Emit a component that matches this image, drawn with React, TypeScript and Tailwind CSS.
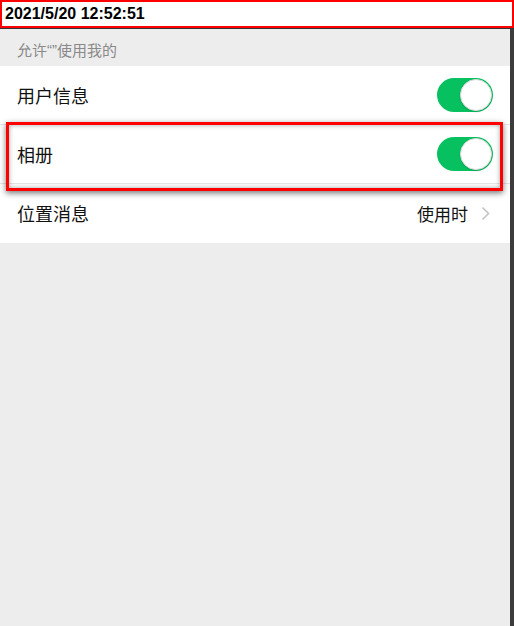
import React from 'react';

const cjk = { fontFamily: '"Noto Sans CJK SC", "Noto Sans", sans-serif' };

const Toggle: React.FC = () => (
  <div className="w-[56px] h-[34px] rounded-full bg-[#07c160] flex items-center justify-end pr-[1px]">
    <div className="w-[32px] h-[32px] rounded-full bg-white border border-[#d9d9d9] shadow-[0_1px_2px_rgba(0,0,0,0.15)]" />
  </div>
);

const Chevron: React.FC = () => (
  <svg width="9" height="15" viewBox="0 0 9 15" className="ml-[13px]">
    <path d="M1.5 1.5 L7.5 7.5 L1.5 13.5" fill="none" stroke="#c4c4c4" strokeWidth="1.6" />
  </svg>
);

const App: React.FC = () => {
  return (
    <div className="w-[514px] h-[626px] flex flex-col bg-[#ededed] overflow-hidden" style={cjk}>
      {/* timestamp bar */}
      <div className="h-[29px] bg-white border-b border-[#333]">
        <div
          className="h-[28px] border-2 border-[#ff0000] pl-[3px] flex items-center text-[16px] font-bold text-black"
          style={{ fontFamily: '"Liberation Sans", Arial, sans-serif' }}
        >
          2021/5/20 12:52:51
        </div>
      </div>

      <div className="flex-1 flex">
        <div className="flex-1 flex flex-col">
          <div className="h-[37px] pl-[17px] pt-[6px] flex items-center text-[15px] text-[#8a8a8a]">
            允许
            <span style={{ fontFamily: '"Liberation Sans", Arial, sans-serif' }}>“”</span>
            使用我的
          </div>

          <div className="bg-white">
            <div className="h-[59px] px-[17px] flex items-center justify-between border-b border-[#e6e6e6]">
              <span className="text-[18px] text-[#111]">用户信息</span>
              <Toggle />
            </div>

            <div className="relative h-[59px] px-[17px] flex items-center justify-between border-b border-[#e6e6e6]">
              <span className="text-[18px] text-[#111]">相册</span>
              <Toggle />
              <div className="absolute left-[6px] top-[-3px] w-[497px] h-[69px] border-[3px] border-[#ff0000] shadow-[0_2px_6px_rgba(0,0,0,0.55),inset_0_0_5px_rgba(0,0,0,0.35)]" />
            </div>

            <div className="h-[59px] pl-[17px] pr-[20px] flex items-center justify-between">
              <span className="text-[18px] text-[#111]">位置消息</span>
              <div className="flex items-center">
                <span className="text-[17px] text-[#111]">使用时</span>
                <Chevron />
              </div>
            </div>
          </div>
        </div>
        <div className="w-[4px] bg-[#3c3c3c]" />
      </div>
    </div>
  );
};

export default App;
